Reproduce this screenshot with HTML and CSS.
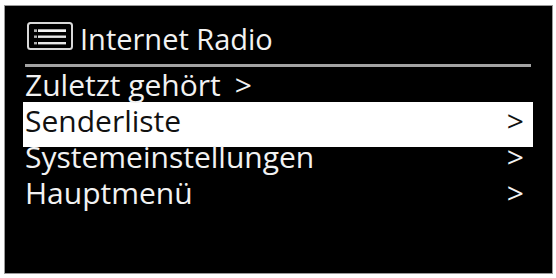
FILE: index.html
```html
<!DOCTYPE html>
<html lang="de">
<head>
<meta charset="utf-8">
<title>Internet Radio</title>
<link rel="stylesheet" href="styles.css">
</head>
<body>
<div class="screen">
  <div class="header">
    <svg class="icon" width="46" height="28" viewBox="0 0 46 28" aria-hidden="true">
      <rect x="1" y="1" width="44" height="26" rx="2.5" fill="none" stroke="#d8d8d8" stroke-width="2"/>
      <rect x="7" y="7.3" width="3" height="2.7" fill="#b0b0b0"/>
      <rect x="11" y="7.3" width="28" height="2.7" fill="#f4f4f4"/>
      <rect x="7" y="13.5" width="3" height="2.4" fill="#b0b0b0"/>
      <rect x="11" y="13.5" width="28" height="2.4" fill="#e8e8e8"/>
      <rect x="7" y="20" width="3" height="2.4" fill="#b0b0b0"/>
      <rect x="11" y="20" width="28" height="2.4" fill="#e8e8e8"/>
    </svg>
    <span class="title">Internet Radio</span>
  </div>
  <div class="separator"></div>
  <ul class="menu">
    <li class="item"><span>Zuletzt gehört</span><span class="chev-inline">&gt;</span></li>
    <li class="item item-selected"><span>Senderliste</span><span class="chev">&gt;</span></li>
    <li class="item"><span>Systemeinstellungen</span><span class="chev">&gt;</span></li>
    <li class="item"><span>Hauptmenü</span><span class="chev">&gt;</span></li>
  </ul>
</div>
</body>
</html>
```

FILE: styles.css
```css
* { box-sizing: border-box; }

html, body {
  margin: 0;
  padding: 0;
  background: #ffffff;
}

body {
  width: 556px;
  height: 278px;
  overflow: hidden;
  font-family: "Open Sans", "Noto Sans", sans-serif;
}

.screen {
  margin: 5px 0 0 4px;
  width: 549px;
  height: 269px;
  background: #000000;
  border: 1px solid #9a9a9a;
  padding: 12.75px 21px 0 20px;
  color: #f2f2f2;
  display: flex;
  flex-direction: column;
}

.header {
  display: flex;
  align-items: flex-start;
  height: 40px;
  gap: 7px;
  padding-left: 2px;
  flex: none;
}

.icon {
  display: block;
  margin-top: 3.25px;
  flex: none;
}

.title {
  font-size: 29px;
  line-height: 40px;
  white-space: nowrap;
}

.separator {
  margin-top: 4.75px;
  height: 3px;
  background: #a3a3a3;
  flex: none;
}

.menu {
  list-style: none;
  margin: 0.86px 0 0 0;
  padding: 0;
}

.item {
  display: flex;
  justify-content: space-between;
  font-size: 30px;
  line-height: 36px;
  height: 36px;
  padding: 0 7px 0 0;
  white-space: nowrap;
}

.item-selected {
  background: #ffffff;
  color: #111111;
  height: 45px;
  margin: -1.36px -2px -7.64px -2px;
  padding: 1.36px 9px 7.64px 2px;
}

.chev-inline {
  margin-left: 14px;
  margin-right: auto;
}
```
